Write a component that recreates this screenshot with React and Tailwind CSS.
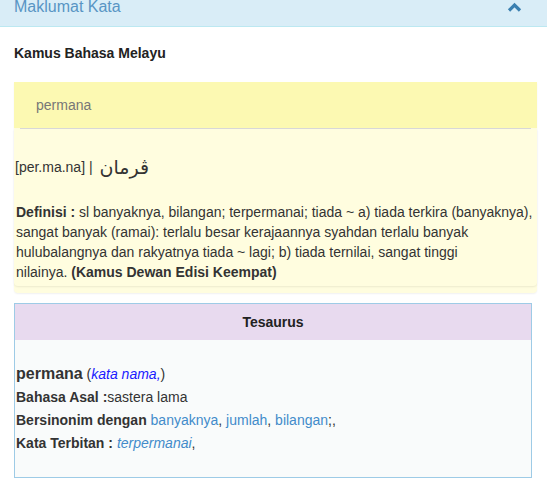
export default function App() {
  return (
    <div className="min-h-screen bg-white text-[#333] font-['Liberation_Sans',Arial,sans-serif] text-[14px]">
      {/* panel heading */}
      <div className="h-[27px] bg-[#d9edf7] border-b border-[#bce8f1] flex items-start justify-between pl-[14px] pr-[25px] overflow-hidden">
        <span className="text-[16px] leading-[16px] text-[#5895c4] -mt-[1px]">Maklumat Kata</span>
        <svg width="15" height="10" viewBox="0 0 15 10" className="mt-[2px]">
          <polyline points="2,8.5 7.5,3 13,8.5" fill="none" stroke="#3b80b0" strokeWidth="3.2" />
        </svg>
      </div>

      <div className="pt-[17px] px-[14px]">
        <h4 className="font-bold text-[14px] leading-[18px] text-[#222]">Kamus Bahasa Melayu</h4>

        {/* kamus panel */}
        <div className="mt-[20px] w-[523px] bg-[#fffddf] rounded-b-[4px] shadow-[0_1px_2px_rgba(0,0,0,0.06)] pb-[7px]">
          <div className="h-[46px] bg-[#fcf9b2] flex items-center pl-[22px] text-[#777]">permana</div>
          <div className="h-px bg-[#d9d9d9] mx-[6px]" />
          <div className="rounded-b-[4px] shadow-[0_1px_2px_rgba(0,0,0,0.08)] pl-[1px] pr-[4px] pb-[4px]">
            <div className="pt-[26px] flex items-center gap-[7px] h-[50px]">
              <span className="text-[14px]">[per.ma.na] |</span>
              <span className="text-[19px] font-['DejaVu_Sans',sans-serif]" dir="rtl">ڤرمان</span>
            </div>
            <p className="mt-[23px] leading-[20px] pl-[1px]">
              <b>Definisi :</b> sl banyaknya, bilangan; terpermanai; tiada ~ a) tiada terkira (banyaknya), sangat banyak (ramai): terlalu besar kerajaannya syahdan terlalu banyak hulubalangnya dan rakyatnya tiada ~ lagi; b) tiada ternilai, sangat tinggi nilainya.{"\u00a0"}<b>(Kamus Dewan Edisi Keempat)</b>
            </p>
          </div>
        </div>

        {/* tesaurus */}
        <div className="mt-[10px] w-[518px] border border-[#9ecbe6] bg-[#f9fbfb]">
          <div className="h-[36px] bg-[#e8daef] flex items-center justify-center font-bold text-[#222]">Tesaurus</div>
          <div className="pl-[1px] pt-[23px] pb-[23px]">
            <div className="leading-[22px]">
              <span className="text-[16px] font-bold">permana</span>{" "}
              <span>(<i className="text-[#1a1aff]">kata nama,</i>)</span>
            </div>
            <div className="leading-[22px] mt-[1px]">
              <b>Bahasa Asal :</b>sastera lama
            </div>
            <div className="leading-[22px] mt-[1px]">
              <b>Bersinonim dengan</b>{" "}
              <span className="text-[#428bca]">banyaknya</span>, <span className="text-[#428bca]">jumlah</span>,{" "}
              <span className="text-[#428bca]">bilangan</span>;,
            </div>
            <div className="leading-[22px] mt-[1px]">
              <b>Kata Terbitan :</b> <i className="text-[#428bca]">terpermanai</i>,
            </div>
          </div>
        </div>
      </div>
    </div>
  );
}
